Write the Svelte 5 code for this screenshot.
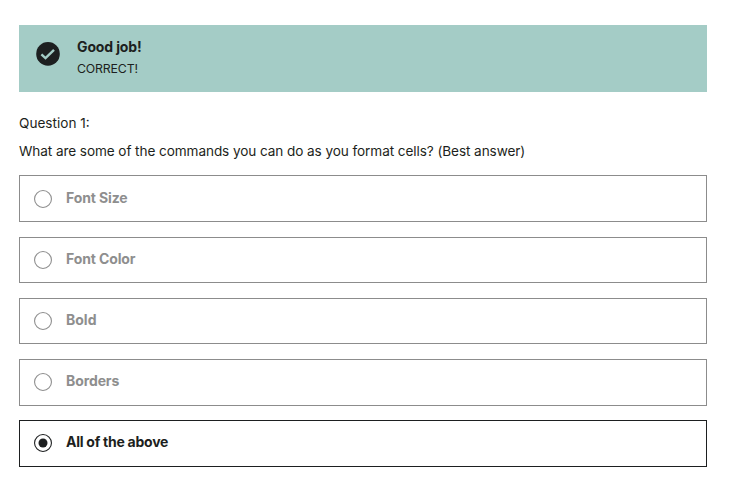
<script>
  const options = [
    { label: 'Font Size', height: 47, gap: 15, spacing: -0.12 },
    { label: 'Font Color', height: 46, gap: 15, spacing: -0.12 },
    { label: 'Bold', height: 46, gap: 15, spacing: 0 },
    { label: 'Borders', height: 47, gap: 14, spacing: -0.1 },
    { label: 'All of the above', height: 47, gap: 0, spacing: -0.25 }
  ];
  let selected = $state('All of the above');
</script>

<main>
  <section class="banner">
    <svg class="check" viewBox="0 0 24 24" aria-hidden="true">
      <circle cx="12" cy="12.4" r="11.8" />
      <path d="M5.4 12.9 9.5 16.7 18 8.3" />
    </svg>
    <div>
      <div class="title">Good job!</div>
      <div class="result">CORRECT!</div>
    </div>
  </section>
  <div class="number">Question 1:</div>
  <div class="question">What are some of the commands you can do as you format cells? (Best answer)</div>
  <div class="options" role="radiogroup">
    {#each options as option}
      <div
        class="option"
        class:selected={selected === option.label}
        role="radio"
        tabindex="-1"
        aria-checked={selected === option.label}
        onclick={() => (selected = option.label)}
        onkeydown={() => (selected = option.label)}
        style="height: {option.height}px; margin-bottom: {option.gap}px"
      >
        <svg class="radio" viewBox="0 0 18 18" aria-hidden="true">
          <circle class="ring" cx="9" cy="9" r="8.45" />
          {#if selected === option.label}<circle class="dot" cx="9" cy="9" r="4.5" />{/if}
        </svg>
        <span style="letter-spacing: {option.spacing}px">{option.label}</span>
      </div>
    {/each}
  </div>
</main>

<style>
  :global(body) {
    background: #fff;
  }
  main {
    box-sizing: border-box;
    width: 733px;
    height: 496px;
    padding: 25px 26px 0 19px;
    overflow: hidden;
    color: #1d1f20;
    font-family: Inter, 'Liberation Sans', Arial, sans-serif;
    font-size: 13.6px;
    white-space: nowrap;
  }
  .banner {
    box-sizing: border-box;
    display: flex;
    height: 67px;
    padding: 12px 17px 0;
    background: #a4ccc6;
  }
  .check {
    width: 24px;
    height: 25px;
    margin: 4px 17px 0 0;
    fill: #1d1f20;
  }
  .check path {
    fill: none;
    stroke: #a4ccc6;
    stroke-width: 2.4;
  }
  .title {
    font-size: 14px;
    font-weight: 700;
    line-height: 20px;
    letter-spacing: -0.13px;
  }
  .result {
    margin-top: 2px;
    font-size: 12.3px;
    line-height: 20px;
    letter-spacing: -0.15px;
  }
  .number {
    margin-top: 21px;
    line-height: 20px;
    letter-spacing: 0;
  }
  .question {
    margin-top: 8px;
    line-height: 20px;
    letter-spacing: -0.087px;
  }
  .options {
    margin-top: 14px;
  }
  .option {
    box-sizing: border-box;
    display: flex;
    align-items: flex-start;
    gap: 14px;
    padding: 13px 14px 0;
    border: 1px solid #8c8c8c;
    color: #8e8e8e;
    font-size: 14px;
    font-weight: 700;
  }
  .option:first-child {
    padding-top: 14px;
  }
  .option span {
    margin-top: -2px;
    line-height: 20px;
  }
  .option.selected {
    border-color: #1d1f20;
    color: #1d1f20;
  }
  .radio {
    width: 18px;
    height: 18px;
  }
  .ring {
    fill: none;
    stroke: currentColor;
    stroke-width: 1.1;
  }
  .dot {
    fill: currentColor;
  }
</style>
